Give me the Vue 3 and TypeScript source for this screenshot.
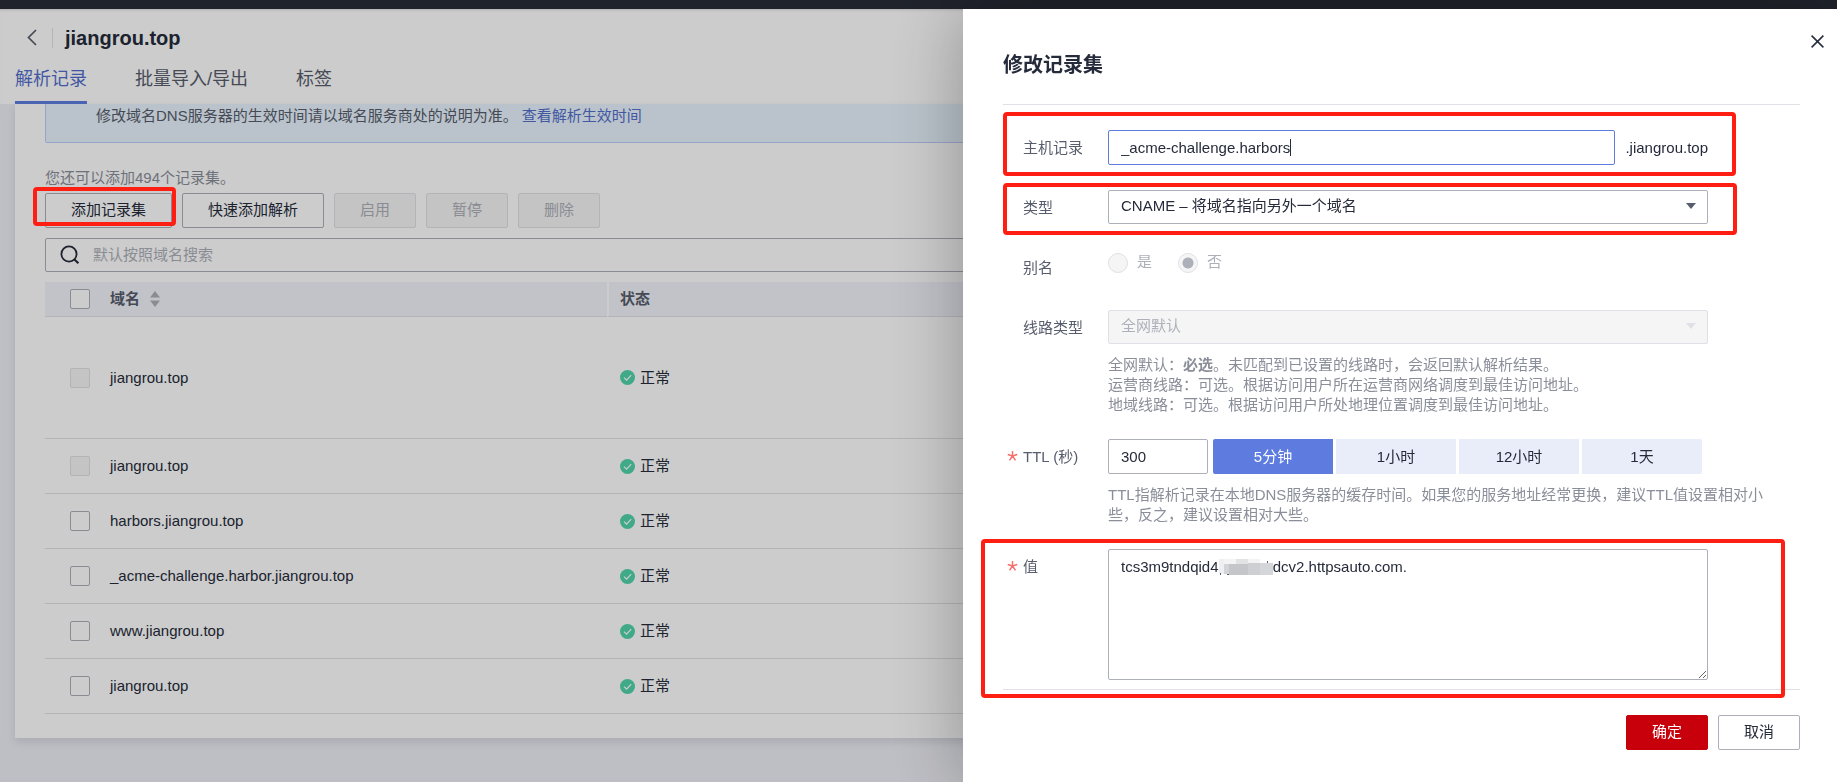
<script setup lang="ts">
import { ref } from 'vue'

interface RecordRow {
  id: number
  name: string
  status: string
  locked: boolean
  tall: boolean
}

const tabs: string[] = ['解析记录', '批量导入/导出', '标签']
const activeTab = ref<string>('解析记录')

const rows: RecordRow[] = [
  { id: 1, name: 'jiangrou.top', status: '正常', locked: true, tall: true },
  { id: 2, name: 'jiangrou.top', status: '正常', locked: true, tall: false },
  { id: 3, name: 'harbors.jiangrou.top', status: '正常', locked: false, tall: false },
  { id: 4, name: '_acme-challenge.harbor.jiangrou.top', status: '正常', locked: false, tall: false },
  { id: 5, name: 'www.jiangrou.top', status: '正常', locked: false, tall: false },
  { id: 6, name: 'jiangrou.top', status: '正常', locked: false, tall: false },
]

const ttlOptions = [
  { label: '5分钟', seconds: 300 },
  { label: '1小时', seconds: 3600 },
  { label: '12小时', seconds: 43200 },
  { label: '1天', seconds: 86400 },
]

const host = ref<string>('_acme-challenge.harbors')
const ttl = ref<number>(300)
const recordValue = ref<string>('tcs3m9tndqid4' + ' '.repeat(13) + 'dcv2.httpsauto.com.')
</script>

<template>
  <div class="page">
    <div class="topbar"></div>

    <header class="head">
      <div class="title-row">
        <button class="back" type="button" aria-label="返回">
          <svg width="10" height="17" viewBox="0 0 10 17"><path d="M9 1 1.5 8.5 9 16" fill="none" stroke="#575d6c" stroke-width="1.7" /></svg>
        </button>
        <h1>jiangrou.top</h1>
      </div>
      <nav class="tabs">
        <button
          v-for="tab in tabs"
          :key="tab"
          type="button"
          :class="{ active: tab === activeTab }"
          @click="activeTab = tab"
        >{{ tab }}</button>
      </nav>
    </header>

    <main class="card">
      <p class="notice">修改域名DNS服务器的生效时间请以域名服务商处的说明为准。<a href="#">查看解析生效时间</a></p>
      <p class="quota">您还可以添加494个记录集。</p>

      <div class="toolbar">
        <div class="marked">
          <button class="btn wide" type="button">添加记录集</button>
          <span class="mark mark-add"></span>
        </div>
        <button class="btn wider" type="button">快速添加解析</button>
        <button class="btn" type="button" disabled>启用</button>
        <button class="btn" type="button" disabled>暂停</button>
        <button class="btn" type="button" disabled>删除</button>
      </div>

      <label class="search">
        <svg width="20" height="20" viewBox="0 0 20 20" fill="none" stroke="#252b3a" stroke-width="1.8">
          <circle cx="9" cy="9" r="7.6" />
          <path d="m14.2 14.2 4.2 4" stroke-width="2.2" />
        </svg>
        <input type="text" placeholder="默认按照域名搜索" aria-label="搜索" />
      </label>

      <table>
        <colgroup>
          <col class="c-check" />
          <col class="c-name" />
          <col />
        </colgroup>
        <thead>
          <tr>
            <th class="check"><input type="checkbox" aria-label="全选" /></th>
            <th>
              <span class="sort">域名
                <svg width="10" height="16" viewBox="0 0 10 16" fill="#adb0b8"><path d="M5 0 10 6.5H0zM5 16 10 9.5H0z" /></svg>
              </span>
            </th>
            <th class="state">状态</th>
          </tr>
        </thead>
        <tbody>
          <tr v-for="row in rows" :key="row.id" :class="{ tall: row.tall }">
            <td class="check"><input type="checkbox" :disabled="row.locked" :aria-label="row.name" /></td>
            <td>{{ row.name }}</td>
            <td class="state">
              <span class="status">
                <svg width="15" height="15" viewBox="0 0 15 15"><circle cx="7.5" cy="7.5" r="7.5" fill="#50d4ab" /><path d="m4 7.6 2.6 2.6L11.2 5.2" fill="none" stroke="#fff" stroke-width="1.2" /></svg>
                {{ row.status }}
              </span>
            </td>
          </tr>
        </tbody>
      </table>
    </main>

    <div class="mask"></div>

    <aside class="drawer" role="dialog" aria-labelledby="drawer-title">
      <button class="close" type="button" aria-label="关闭">
        <svg width="13" height="13" viewBox="0 0 13 13"><path d="M.6.6l11.8 11.8M12.4.6.6 12.4" stroke="#252b3a" stroke-width="1.5" /></svg>
      </button>
      <h2 id="drawer-title">修改记录集</h2>

      <form class="form" @submit.prevent>
        <div class="row">
          <span></span>
          <label for="host">主机记录</label>
          <div class="host">
            <div class="host-field">
              <input id="host" v-model="host" class="field focused" type="text" />
              <span class="caret"></span>
            </div>
            <span>.jiangrou.top</span>
          </div>
          <span class="mark mark-host"></span>
        </div>

        <div class="row">
          <span></span>
          <label for="type">类型</label>
          <div class="select">
            <select id="type"><option>CNAME – 将域名指向另外一个域名</option></select>
            <svg width="10" height="6" viewBox="0 0 10 6"><path d="M0 0h10L5 6z" fill="#575d6c" /></svg>
          </div>
          <span class="mark mark-type"></span>
        </div>

        <div class="row">
          <span></span>
          <span class="label">别名</span>
          <div class="radios">
            <label><input type="radio" name="alias" disabled />是</label>
            <label><input type="radio" name="alias" checked disabled />否</label>
          </div>
        </div>

        <div class="row">
          <span></span>
          <label for="line">线路类型</label>
          <div>
            <div class="select off">
              <select id="line" disabled><option>全网默认</option></select>
              <svg width="10" height="6" viewBox="0 0 10 6"><path d="M0 0h10L5 6z" fill="#dfe1e6" /></svg>
            </div>
            <p class="help">
              全网默认：<b>必选</b>。未匹配到已设置的线路时，会返回默认解析结果。<br />
              运营商线路：可选。根据访问用户所在运营商网络调度到最佳访问地址。<br />
              地域线路：可选。根据访问用户所处地理位置调度到最佳访问地址。
            </p>
          </div>
        </div>

        <div class="row">
          <svg class="req" width="11" height="12" viewBox="0 0 12 12"><path d="M6 6V.5M6 6 .8 4.4M6 6l5.2-1.6M6 6l-3.3 4.8M6 6l3.3 4.8" stroke="#f66f6a" stroke-width="1.6" /></svg>
          <label for="ttl">TTL (秒)</label>
          <div>
            <div class="ttl">
              <input id="ttl" v-model.number="ttl" class="field" type="text" />
              <div class="segments">
                <button
                  v-for="option in ttlOptions"
                  :key="option.seconds"
                  type="button"
                  :class="{ on: ttl === option.seconds }"
                  @click="ttl = option.seconds"
                >{{ option.label }}</button>
              </div>
            </div>
            <p class="help">TTL指解析记录在本地DNS服务器的缓存时间。如果您的服务地址经常更换，建议TTL值设置相对小些，反之，建议设置相对大些。</p>
          </div>
        </div>

        <div class="row">
          <svg class="req" width="11" height="12" viewBox="0 0 12 12"><path d="M6 6V.5M6 6 .8 4.4M6 6l5.2-1.6M6 6l-3.3 4.8M6 6l3.3 4.8" stroke="#f66f6a" stroke-width="1.6" /></svg>
          <label for="value">值</label>
          <div class="value">
            <textarea id="value" v-model="recordValue" spellcheck="false"></textarea>
            <svg class="mosaic" width="54" height="18" viewBox="0 0 54 18">
              <path fill="#efeff1" d="M0 1h5v15H0z" />
              <path fill="#d3d4d7" d="M5 6h11v10H5z" />
              <path fill="#f3f3f5" d="M5 1h12v5H5zM29 1h12v4H29z" />
              <path fill="#e2e3e5" d="M17 1h12v5H17z" />
              <path fill="#c5c6ca" d="M10 6h19v11H10z" />
              <path fill="#cecfd2" d="M29 5h12v12H29z" />
              <path fill="#d5d6d9" d="M41 5h13v12H41z" />
              <path fill="#5c606c" d="M1 15h1v2H1zM8 16h2v1H8zM48 3h1v2h-1z" />
            </svg>
          </div>
          <span class="mark mark-value"></span>
        </div>
      </form>

      <footer>
        <button class="btn primary" type="button">确定</button>
        <button class="btn" type="button">取消</button>
      </footer>
    </aside>
  </div>
</template>

<style>
body {
  margin: 0;
  background: #eeeff5;
  overflow: hidden;
}
</style>

<style scoped>
* {
  box-sizing: border-box;
}
.page {
  min-height: 100vh;
  font: 15px/20px "Liberation Sans", "Noto Sans CJK SC", sans-serif;
  color: #252b3a;
}
button,
input,
select,
textarea {
  font: inherit;
  color: inherit;
  margin: 0;
}
button {
  cursor: pointer;
}
p,
h1,
h2 {
  margin: 0;
}
svg {
  display: block;
  flex: none;
}
.topbar {
  height: 9px;
  background: #282c37;
}
.head {
  background: #fff;
  height: 95px;
  padding: 0 15px;
  display: flex;
  flex-direction: column;
  justify-content: space-between;
  box-shadow: inset 0 3px 3px -2px rgba(0, 0, 0, 0.15);
}
.title-row {
  display: flex;
  align-items: center;
  padding: 19px 0 0 12px;
}
.back {
  border: 0;
  border-right: 1px solid #dfe1e6;
  background: none;
  padding: 0 15px 2px 0;
  height: 20px;
}
h1 {
  font-size: 20px;
  line-height: 20px;
  margin-left: 12px;
}
.tabs {
  display: flex;
  gap: 48px;
}
.tabs button {
  border: 0;
  border-bottom: 3px solid transparent;
  background: none;
  padding: 0 0 10px;
  font-size: 18px;
  line-height: 24px;
  color: #575d6c;
}
.tabs .active {
  color: #526ecc;
  border-color: #5e7ce0;
}
.card {
  margin: 0 15px;
  padding: 0 30px 24px;
  background: #fff;
  box-shadow: 0 4px 8px rgba(40, 44, 80, 0.12);
}
.notice {
  background: #e9f4fe;
  border: 1px solid #beccfa;
  border-top: 0;
  border-radius: 0 0 2px 2px;
  padding: 0 50px 14px;
  line-height: 24px;
  color: #575d6c;
}
.notice a {
  margin-left: 4px;
  color: #526ecc;
  text-decoration: none;
}
.quota {
  margin: 25px 0 5px;
  color: #8a8e99;
}
.toolbar {
  display: flex;
  gap: 10px;
}
.btn {
  width: 82px;
  height: 35px;
  padding: 0 0 2px;
  border: 1px solid #adb0b8;
  border-radius: 2px;
  background: #fff;
}
.btn.wide {
  width: 127px;
}
.btn.wider {
  width: 142px;
}
.btn:disabled {
  background: #f5f5f6;
  border-color: #dfe1e6;
  color: #adb0b8;
}
.btn.primary {
  background: #c7000b;
  border-color: #c7000b;
  color: #fff;
}
.marked {
  position: relative;
}
.mark {
  position: absolute;
  border: 4px solid #ff1f12;
  border-radius: 4px;
  pointer-events: none;
  z-index: 30;
}
.mark-add {
  inset: -6px -4px 2px -12px;
}
.search {
  display: flex;
  align-items: center;
  gap: 13px;
  height: 34px;
  margin: 10px 0;
  padding: 0 14px;
  border: 1px solid #adb0b8;
  border-radius: 2px;
}
.search input {
  flex: 1;
  border: 0;
  padding: 0;
  outline: 0;
  background: none;
}
.search input::placeholder {
  color: #adb0b8;
}
table {
  width: 100%;
  table-layout: fixed;
  border-spacing: 0;
}
.c-check {
  width: 65px;
}
.c-name {
  width: 497px;
}
th,
td {
  padding: 0;
  text-align: left;
  border-bottom: 1px solid #dfe1e6;
}
th {
  height: 35px;
  background: #f2f4fb;
  color: #575d6c;
}
td {
  height: 55px;
}
.tall td {
  height: 122px;
}
.check {
  padding-left: 25px;
}
td.state {
  padding-left: 13px;
}
th.state {
  border-left: 2px solid #fff;
  padding-left: 11px;
}
input[type="checkbox"] {
  appearance: none;
  display: block;
  width: 20px;
  height: 20px;
  border: 1px solid #adb0b8;
  border-radius: 2px;
  background: #fff;
}
input[type="checkbox"]:disabled {
  background: #f5f5f6;
  border-color: #dfe1e6;
}
.sort {
  display: flex;
  align-items: center;
  gap: 10px;
}
.status {
  display: flex;
  align-items: center;
  gap: 5px;
}
.mask {
  position: fixed;
  inset: 0;
  background: rgba(0, 0, 0, 0.2);
  z-index: 10;
}
.drawer {
  position: fixed;
  inset: 9px 0 0 auto;
  width: 874px;
  max-width: 100%;
  padding: 0 37px 0 40px;
  background: #fff;
  box-shadow: 0 0 70px rgba(0, 0, 0, 0.3);
  display: flex;
  flex-direction: column;
  z-index: 20;
}
.close {
  position: absolute;
  top: 26px;
  right: 13px;
  border: 0;
  padding: 0;
  background: none;
}
h2 {
  font-size: 20px;
  line-height: 28px;
  padding: 42px 0 25px;
  border-bottom: 1px solid #dfe1e6;
}
.form {
  flex: 1;
  display: flex;
  flex-direction: column;
  gap: 25px;
  padding-top: 25px;
}
.row {
  position: relative;
  display: grid;
  grid-template-columns: 20px 85px minmax(0, 1fr);
  min-height: 35px;
}
.row > label,
.label {
  line-height: 35px;
  color: #575d6c;
}
.req {
  margin: 11px 0 0 4px;
}
.mark-host {
  inset: -18px 64px -11px 0;
}
.mark-type {
  inset: -7px 63px -10px 0;
}
.mark-value {
  inset: -10px 15px -18px -22px;
}
.host,
.select,
.value {
  position: relative;
  max-width: 600px;
}
.host {
  display: flex;
  align-items: center;
  justify-content: space-between;
  gap: 10px;
}
.host-field {
  position: relative;
  width: 507px;
}
.field {
  width: 100%;
  height: 35px;
  padding: 0 12px;
  border: 1px solid #adb0b8;
  border-radius: 2px;
  background: #fff;
  outline: 0;
}
.focused {
  border-color: #5e7ce0;
}
.caret {
  position: absolute;
  top: 9px;
  left: 182px;
  width: 1px;
  height: 17px;
  background: #252b3a;
}
.select {
  height: 34px;
}
.select select {
  appearance: none;
  width: 100%;
  height: 34px;
  padding: 0 30px 2px 12px;
  border: 1px solid #adb0b8;
  border-radius: 2px;
  background: #fff;
}
.select svg {
  position: absolute;
  top: 13px;
  right: 12px;
}
.off select {
  background: #f5f5f6;
  border-color: #dfe1e6;
  color: #adb0b8;
  opacity: 1;
}
.radios {
  display: flex;
  align-items: flex-start;
  gap: 26px;
  padding-top: 3px;
  color: #adb0b8;
}
.radios label {
  display: flex;
  gap: 9px;
  line-height: 18px;
}
.radios input {
  appearance: none;
  width: 20px;
  height: 20px;
  border: 1px solid #dfe1e6;
  border-radius: 50%;
  background: #f5f5f6;
}
.radios input:checked {
  background: radial-gradient(circle, #adb0b8 5px, #f5f5f6 6px);
}
.help {
  max-width: 660px;
  padding-top: 11px;
  margin-bottom: -1px;
  color: #8a8e99;
}
.ttl {
  display: flex;
  gap: 5px;
}
.ttl .field {
  width: 100px;
}
.segments {
  display: flex;
  gap: 3px;
  border-radius: 2px;
  overflow: hidden;
}
.segments button {
  width: 120px;
  height: 35px;
  border: 0;
  padding: 0;
  background: #e9edfa;
}
.segments .on {
  background: #5e7ce0;
  color: #fff;
}
textarea {
  display: block;
  width: 100%;
  height: 131px;
  padding: 7px 12px;
  border: 1px solid #adb0b8;
  border-radius: 2px;
  outline: 0;
  background: #fff;
}
.mosaic {
  position: absolute;
  top: 9px;
  left: 111px;
}
footer {
  display: flex;
  justify-content: flex-end;
  gap: 10px;
  padding: 25px 0 32px;
  border-top: 1px solid #dfe1e6;
}
</style>
